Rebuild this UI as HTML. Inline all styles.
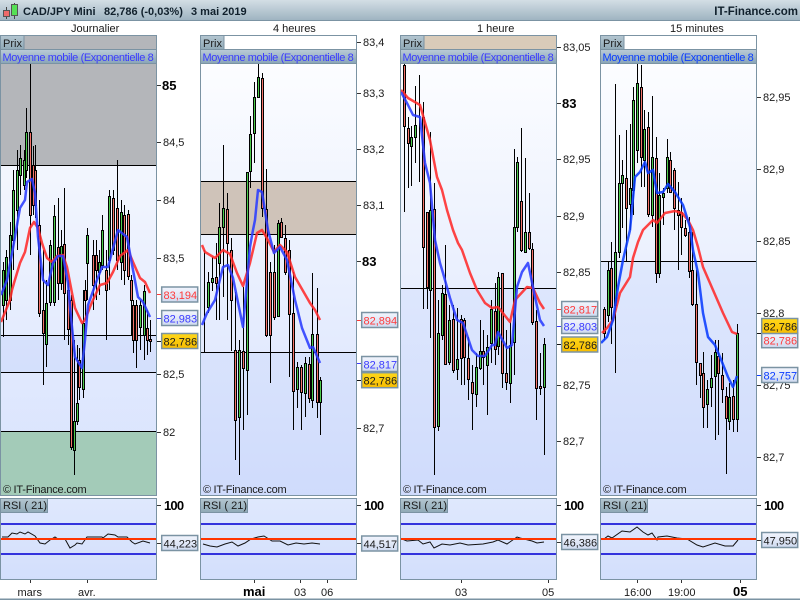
<!DOCTYPE html>
<html><head><meta charset="utf-8"><title>CAD/JPY Mini</title>
<style>
html,body{margin:0;padding:0;background:#fff;width:800px;height:600px;overflow:hidden}
svg{display:block;position:absolute;left:0;top:0}
text{font-family:"Liberation Sans",Arial,sans-serif;font-size:11px;fill:#1a1a1a}
.b{font-weight:bold;font-size:13px;fill:#000}
.h{font-weight:bold;font-size:11px;fill:#10202c}
.c{letter-spacing:-.2px}
.m{letter-spacing:-.38px}
.hh{font-size:13px;letter-spacing:-.8px}
.w{fill:none;stroke:#000;stroke-width:1}
.g{fill:#4ccb4c;stroke:#000;stroke-width:1}
.r{fill:#f4736a;stroke:#000;stroke-width:1}
.ln{fill:none;stroke-width:2.5;stroke-linejoin:round;stroke-opacity:.88}
.rs{fill:none;stroke:#111;stroke-width:1}
.t{stroke:#333;stroke-width:1;fill:none}
.bx{stroke:#7b93a3;stroke-width:1.5}
.pb{fill:none;stroke:#7b93a3;stroke-width:1}
</style></head><body>
<svg width="800" height="600" viewBox="0 0 800 600" xmlns="http://www.w3.org/2000/svg">
<defs>
<linearGradient id="hd" x1="0" y1="0" x2="0" y2="1"><stop offset="0" stop-color="#d3dee5"/><stop offset="1" stop-color="#9fb4c1"/></linearGradient>
<linearGradient id="bar" x1="0" y1="0" x2="0" y2="1"><stop offset="0" stop-color="#b9cad6"/><stop offset="1" stop-color="#8aa6b8"/></linearGradient>
<linearGradient id="lab" x1="0" y1="0" x2="0" y2="1"><stop offset="0" stop-color="#b4c6d1"/><stop offset="1" stop-color="#8fa9b6"/></linearGradient>
<linearGradient id="bg" gradientUnits="userSpaceOnUse" x1="0" y1="63" x2="0" y2="497"><stop offset="0" stop-color="#fcfdff"/><stop offset="1" stop-color="#d6e1fd"/></linearGradient>
<linearGradient id="dk" gradientUnits="userSpaceOnUse" x1="0" y1="261" x2="0" y2="497"><stop offset="0" stop-color="#dfe8fd"/><stop offset="1" stop-color="#cfdbfc"/></linearGradient>
<linearGradient id="rsi" x1="0" y1="0" x2="0" y2="1"><stop offset="0" stop-color="#dfe8fd"/><stop offset="1" stop-color="#d3dffc"/></linearGradient>
<linearGradient id="box" x1="0" y1="0" x2="0" y2="1"><stop offset="0" stop-color="#f2f5fd"/><stop offset="1" stop-color="#cfdaf0"/></linearGradient>
<linearGradient id="gold" x1="0" y1="0" x2="0" y2="1"><stop offset="0" stop-color="#ffd81a"/><stop offset="1" stop-color="#f8bd00"/></linearGradient>
</defs>

<!-- header -->
<rect x="0" y="0" width="800" height="20" fill="url(#hd)"/>
<rect x="0" y="20" width="800" height="1" fill="#7b93a3"/>
<path d="M6.5 7V19M14.500 3V19" stroke="#444" stroke-width="1" fill="none"/>
<rect x="3.500" y="10.500" width="6" height="6" fill="#ee6a6a" stroke="#555"/>
<rect x="11.500" y="4.500" width="6" height="11" fill="#55e055" stroke="#555"/>
<text class="h" x="23" y="15">CAD/JPY Mini</text>
<text class="h" x="104" y="15">82,786 (-0,03%)</text>
<text class="h" x="191" y="15">3 mai 2019</text>
<text class="h" x="798" y="15" text-anchor="end" style="font-size:11.5px">IT-Finance.com</text>
<text x="71" y="32">Journalier</text>
<text x="273" y="32">4 heures</text>
<text x="477" y="32">1 heure</text>
<text x="670" y="32">15 minutes</text>

<!-- PANEL 1 backgrounds -->
<rect x="0" y="35" width="157" height="461" fill="url(#bg)"/>
<rect x="0" y="35" width="157" height="130" fill="#b4b6ba"/>
<rect x="0" y="335" width="157" height="37" fill="#c6d5fa" fill-opacity=".45"/>
<rect x="0" y="431" width="157" height="65" fill="#a3cbb8"/>
<path d="M0 165.500H157M0 335.500H157M0 372.500H157M0 431.500H157" class="w"/>
<path class="w" d="M3.500 262V337M6.500 250V320M10.500 222V310M13.500 170V270M17.500 150V250M20.500 145V195M24.500 150V190M26.500 108V178M30.500 63V255M33.500 146V215M35.500 145V218M39.500 200V317M43.500 250V385M46.500 280V367M50.500 240V306M54.500 205V306M58.500 198V300M61.500 230V290M64.500 188V340M68.500 280V345M71.500 295V450M74.500 340V475M77.500 345V425M79.500 348V400M83.500 290V398M85.500 280V320M87.500 228V300M93.500 240V310M96.500 240V300M99.500 250V295M102.500 215V270M106.500 250V340M109.500 190V290M113.500 190V255M117.500 160V270M121.500 200V280M124.500 205V285M128.500 210V280M131.500 275V335M133.500 300V353M136.500 300V368M140.500 300V350M144.500 285V360M147.500 310V355M150.500 320V352"/>
<path class="g" d="M2.500 270.500h2V305.500h-2zM5.500 257.500h2V300.500h-2zM9.500 235.500h2V300.500h-2zM12.500 190.500h2V240.500h-2zM16.500 170.500h2V210.500h-2zM19.500 158.500h2V175.500h-2zM23.500 160.500h2V185.500h-2zM25.500 132.500h2V170.500h-2zM45.500 303.500h2V344.500h-2zM49.500 245.500h2V302.500h-2zM53.500 216.500h2V302.500h-2zM60.500 246.500h2V283.500h-2zM73.500 421.500h2V450.500h-2zM76.500 403.500h2V421.500h-2zM82.500 323.500h2V389.500h-2zM86.500 235.500h2V263.500h-2zM98.500 262.500h2V272.500h-2zM101.500 230.500h2V265.500h-2zM108.500 196.500h2V260.500h-2zM120.500 212.500h2V262.500h-2zM139.500 305.500h2V327.500h-2zM143.500 291.500h2V335.500h-2z"/>
<path class="r" d="M29.500 132.500h2V215.500h-2zM32.500 165.500h2V205.500h-2zM34.500 170.500h2V205.500h-2zM38.500 225.500h2V313.500h-2zM42.500 310.500h2V333.500h-2zM57.500 247.500h2V283.500h-2zM63.500 244.500h2V293.500h-2zM67.500 290.500h2V329.500h-2zM70.500 300.500h2V447.500h-2zM78.500 360.500h2V387.500h-2zM84.500 290.500h2V300.500h-2zM92.500 255.500h2V285.500h-2zM95.500 255.500h2V270.500h-2zM105.500 270.500h2V290.500h-2zM112.500 198.500h2V250.500h-2zM116.500 208.500h2V260.500h-2zM123.500 215.500h2V270.500h-2zM127.500 214.500h2V276.500h-2zM130.500 280.500h2V300.500h-2zM132.500 305.500h2V340.500h-2zM135.500 305.500h2V340.500h-2zM146.500 328.500h2V340.500h-2zM149.500 339.500h2V341.500h-2z"/>
<polyline class="ln" stroke="#ff2a2a" points="1,322 10,300 12,290 14,283 20,263 25,252 30,228 34,222 38,228 42,243 47,258 52,262 57,256 63,255 67,267 72,293 75,308 82,323 85,320 90,307 93,300 100,285 107,283 113,272 120,256 128,250 133,262 140,278 145,282 150,293"/>
<polyline class="ln" stroke="#2a3cff" points="1,295 7,280 13,248 20,208 25,200 27,182 32,179 35,193 38,237 43,280 48,285 53,263 58,256 63,256 68,283 70,307 75,357 82,368 85,340 88,305 97,280 102,267 108,267 118,230 127,237 133,270 138,297 143,302 150,317"/>
<rect x="0" y="35" width="157" height="15" fill="#b4b6ba"/>

<!-- PANEL 2 -->
<rect x="200" y="35" width="157" height="461" fill="url(#bg)"/>
<rect x="200" y="35" width="157" height="15" fill="#fff"/>
<rect x="200" y="181" width="157" height="53" fill="#cfc3b9"/>
<rect x="200" y="352" width="157" height="144" fill="url(#dk)"/>
<path d="M200 181.500H357M200 234.500H357M200 352.500H357" class="w"/>
<path class="w" d="M204.500 250V353M208.500 272V313M212.500 257V291M216.500 243V320M219.500 203V320M223.500 145V297M227.500 193V320M231.500 238V351M235.500 292V460M239.500 340V475M243.500 287V430M247.500 215V415M250.500 116V188M254.500 82V163M258.500 63V98M262.500 73V217M266.500 169V337M270.500 262V383M274.500 245V320M278.500 220V317M281.500 218V238M285.500 225V275M289.500 240V377M293.500 272V430M297.500 362V408M301.500 365V430M305.500 357V417M309.500 357V403M312.500 273V408M317.500 288V418M320.500 377V435"/>
<path class="g" d="M207.500 282.500h2V307.500h-2zM211.500 278.500h2V282.500h-2zM218.500 227.500h2V263.500h-2zM222.500 208.500h2V227.500h-2zM238.500 350.500h2V417.500h-2zM246.500 172.500h2V370.500h-2zM249.500 134.500h2V171.500h-2zM253.500 97.500h2V133.500h-2zM257.500 77.500h2V97.500h-2zM277.500 223.500h2V316.500h-2zM296.500 367.500h2V389.500h-2zM304.500 363.500h2V393.500h-2zM311.500 334.500h2V400.500h-2zM319.500 380.500h2V402.500h-2z"/>
<path class="r" d="M215.500 277.500h2V283.500h-2zM226.500 209.500h2V243.500h-2zM230.500 250.500h2V300.500h-2zM234.500 350.500h2V420.500h-2zM242.500 351.500h2V368.500h-2zM261.500 78.500h2V208.500h-2zM265.500 209.500h2V335.500h-2zM269.500 272.500h2V335.500h-2zM273.500 272.500h2V317.500h-2zM280.500 222.500h2V237.500h-2zM284.500 238.500h2V272.500h-2zM288.500 250.500h2V314.500h-2zM292.500 313.500h2V391.500h-2zM300.500 367.500h2V392.500h-2zM308.500 364.500h2V398.500h-2zM316.500 334.500h2V402.500h-2z"/>
<polyline class="ln" stroke="#ff2a2a" points="202,245 205,252 215,258 223,250 230,254 237,273 243,286 250,263 257,233 262,230 268,240 274,252 280,245 287,252 295,277 310,303 315,310 320,320"/>
<polyline class="ln" stroke="#2a3cff" points="202,325 207,313 215,300 223,267 228,265 233,278 243,327 250,247 253,230 255,220 258,190 262,192 268,230 274,253 280,247 287,260 295,300 302,328 310,348 313,347 320,363"/>

<!-- PANEL 3 -->
<rect x="400" y="35" width="157" height="461" fill="url(#bg)"/>
<rect x="400" y="35" width="157" height="15" fill="#d9cbb9"/>
<rect x="400" y="288" width="157" height="208" fill="url(#dk)"/>
<path d="M400 288.500H557" class="w"/>
<path class="w" d="M404.500 63V212M408.500 117V188M411.500 126V186M415.500 86V163M419.500 75V182M423.500 102V309M427.500 212V309M430.500 132V338M434.500 183V475M438.500 300V431M442.500 285V340M445.500 245V365M449.500 305V365M453.500 305V373M457.500 308V380M461.500 315V385M464.500 318V385M468.500 337V400M472.500 365V430M476.500 353V407M480.500 320V370M483.500 330V385M487.500 335V415M491.500 300V363M495.500 283V365M498.500 272V355M502.500 273V388M506.500 330V390M510.500 322V403M514.500 149V375M517.500 157V232M521.500 128V252M525.500 158V253M529.500 193V250M532.500 243V325M536.500 310V420M540.500 353V395M544.500 338V455"/>
<path class="g" d="M410.500 137.500h2V146.500h-2zM414.500 125.500h2V137.500h-2zM429.500 210.500h2V290.500h-2zM437.500 333.500h2V426.500h-2zM441.500 293.500h2V335.500h-2zM448.500 320.500h2V362.500h-2zM456.500 359.500h2V369.500h-2zM475.500 367.500h2V394.500h-2zM479.500 351.500h2V368.500h-2zM486.500 347.500h2V365.500h-2zM490.500 309.500h2V343.500h-2zM497.500 277.500h2V346.500h-2zM509.500 345.500h2V383.500h-2zM513.500 227.500h2V342.500h-2zM516.500 162.500h2V227.500h-2zM524.500 232.500h2V252.500h-2zM543.500 344.500h2V387.500h-2z"/>
<path class="r" d="M403.500 65.500h2V126.500h-2zM407.500 128.500h2V143.500h-2zM422.500 117.500h2V247.500h-2zM426.500 212.500h2V287.500h-2zM433.500 209.500h2V427.500h-2zM444.500 294.500h2V364.500h-2zM452.500 319.500h2V370.500h-2zM460.500 319.500h2V358.500h-2zM463.500 320.500h2V357.500h-2zM467.500 358.500h2V379.500h-2zM471.500 382.500h2V393.500h-2zM482.500 351.500h2V357.500h-2zM494.500 311.500h2V349.500h-2zM501.500 273.500h2V373.500h-2zM505.500 373.500h2V382.500h-2zM520.500 201.500h2V250.500h-2zM528.500 232.500h2V248.500h-2zM531.500 249.500h2V322.500h-2zM535.500 321.500h2V388.500h-2zM539.500 386.500h2V388.500h-2z"/>
<polyline class="ln" stroke="#ff2a2a" points="401,90 408,98 420,105 430,140 437,177 442,190 447,210 453,230 458,243 462,250 470,273 477,290 485,303 492,308 498,307 510,322 515,300 527,287 533,288 540,303 544,309"/>
<polyline class="ln" stroke="#2a3cff" points="401,92 408,105 413,115 420,117 425,163 430,183 433,217 435,240 440,263 443,273 450,298 457,320 463,323 472,350 478,356 485,356 492,345 495,345 498,332 507,348 512,345 517,287 522,272 528,263 535,297 540,320 544,326"/>

<!-- PANEL 4 -->
<rect x="600" y="35" width="157" height="461" fill="url(#bg)"/>
<rect x="600" y="35" width="157" height="15" fill="#fff"/>
<rect x="600" y="261" width="157" height="235" fill="url(#dk)"/>
<path d="M600 261.500H757" class="w"/>
<path class="w" d="M604.500 307V340M608.500 262V322M611.500 242V344M615.500 84V373M619.500 135V258M622.500 160V228M626.500 130V262M630.500 124V230M633.500 87V215M637.500 63V163M641.500 65V187M644.500 110V187M648.500 112V217M652.500 96V227M656.500 137V283M659.500 173V278M663.500 188V225M667.500 139V193M670.500 152V193M674.500 168V230M678.500 182V270M681.500 198V255M685.500 220V237M689.500 217V278M692.500 232V306M696.500 270V385M700.500 363V398M703.500 352V428M707.500 380V428M711.500 355V407M715.500 340V440M718.500 340V435M722.500 353V403M726.500 387V474M729.500 383V430M733.500 380V432M737.500 324V432"/>
<path class="g" d="M607.500 270.500h2V315.500h-2zM614.500 252.500h2V305.500h-2zM618.500 183.500h2V252.500h-2zM621.500 175.500h2V183.500h-2zM629.500 188.500h2V204.500h-2zM632.500 100.500h2V190.500h-2zM636.500 83.500h2V150.500h-2zM643.500 129.500h2V160.500h-2zM651.500 157.500h2V215.500h-2zM658.500 195.500h2V273.500h-2zM662.500 193.500h2V197.500h-2zM666.500 157.500h2V188.500h-2zM706.500 389.500h2V404.500h-2zM710.500 378.500h2V387.500h-2zM714.500 352.500h2V376.500h-2zM728.500 397.500h2V421.500h-2zM736.500 333.500h2V419.500h-2z"/>
<path class="r" d="M603.500 309.500h2V333.500h-2zM610.500 268.500h2V307.500h-2zM625.500 178.500h2V208.500h-2zM640.500 87.500h2V157.500h-2zM647.500 127.500h2V214.500h-2zM655.500 158.500h2V273.500h-2zM669.500 160.500h2V192.500h-2zM673.500 170.500h2V208.500h-2zM677.500 210.500h2V215.500h-2zM680.500 212.500h2V227.500h-2zM684.500 228.500h2V235.500h-2zM688.500 232.500h2V271.500h-2zM691.500 270.500h2V304.500h-2zM695.500 304.500h2V362.500h-2zM699.500 363.500h2V375.500h-2zM702.500 373.500h2V407.500h-2zM717.500 356.500h2V373.500h-2zM721.500 375.500h2V389.500h-2zM725.500 396.500h2V418.500h-2zM732.500 396.500h2V419.500h-2z"/>
<polyline class="ln" stroke="#ff2a2a" points="602,333 607,328 613,320 620,293 630,277 633,258 638,242 643,230 653,220 657,223 665,213 675,211 682,213 688,220 693,230 698,247 703,267 713,290 723,313 732,332 737,334"/>
<polyline class="ln" stroke="#0a3cff" points="601,343 607,337 613,320 618,287 623,260 630,230 635,177 640,172 645,162 648,173 653,170 657,193 663,192 668,184 675,192 683,205 690,227 693,250 698,273 703,313 708,337 715,345 722,362 728,377 733,387 737,376"/>

<!-- top bars over panels -->
<g>
<rect x="0" y="50" width="157" height="13" fill="url(#bar)"/>
<rect x="200" y="50" width="157" height="13" fill="url(#bar)"/>
<rect x="400" y="50" width="157" height="13" fill="url(#bar)"/>
<rect x="600" y="50" width="157" height="13" fill="url(#bar)"/>
<path d="M0 63.500H157M200 63.500H357M400 63.500H557M600 63.500H757M0 49.500H157M200 49.500H357M400 49.500H557M600 49.500H757" stroke="#7b93a3" fill="none"/>
<rect x="0.500" y="35.500" width="23.500" height="14" fill="url(#lab)" stroke="#7b93a3"/>
<rect x="200.500" y="35.500" width="23.500" height="14" fill="url(#lab)" stroke="#7b93a3"/>
<rect x="400.500" y="35.500" width="23.500" height="14" fill="url(#lab)" stroke="#7b93a3"/>
<rect x="600.500" y="35.500" width="23.500" height="14" fill="url(#lab)" stroke="#7b93a3"/>
<text x="3" y="47">Prix</text><text x="203" y="47">Prix</text><text x="403" y="47">Prix</text><text x="603" y="47">Prix</text>
<svg x="0" y="50" width="156" height="14"><text class="m" x="2.500" y="11" style="fill:#3a3aff">Moyenne mobile (Exponentielle 8</text></svg>
<svg x="200" y="50" width="156" height="14"><text class="m" x="2.500" y="11" style="fill:#3a3aff">Moyenne mobile (Exponentielle 8</text></svg>
<svg x="400" y="50" width="156" height="14"><text class="m" x="2.500" y="11" style="fill:#3a3aff">Moyenne mobile (Exponentielle 8</text></svg>
<svg x="600" y="50" width="156" height="14"><text class="m" x="2.500" y="11" style="fill:#0a3cff">Moyenne mobile (Exponentielle 8</text></svg>
</g>
<text x="3" y="493">©</text><text class="c" x="13.500" y="493">IT-Finance.com</text>
<text x="203" y="493">©</text><text class="c" x="213.500" y="493">IT-Finance.com</text>
<text x="403" y="493">©</text><text class="c" x="413.500" y="493">IT-Finance.com</text>
<text x="603" y="493">©</text><text class="c" x="613.500" y="493">IT-Finance.com</text>
<path class="pb" d="M.5 35.500H156.500V495.500H.5zM200.500 35.500H356.500V495.500H200.500zM400.500 35.500H556.500V495.500H400.500zM600.500 35.500H756.500V495.500H600.500z"/>

<!-- axis ticks -->
<path class="t" d="M157 85.500h4M157 142.500h4M157 200.500h4M157 258.500h4M157 374.500h4M157 432.500h4M357 42.500h4M357 93.500h4M357 149.500h4M357 205.500h4M357 261.500h4M357 428.500h4M557 47.500h4M557 103.500h4M557 159.500h4M557 216.500h4M557 272.500h4M557 385.500h4M557 441.500h4M757 97.500h4M757 169.500h4M757 241.500h4M757 313.500h4M757 385.500h4M757 457.500h4"/>
<path d="M157 294.500h4" stroke="#ff3a3a"/><path d="M157 318.500h4" stroke="#3a3aff"/><path d="M157 341.500h4" stroke="#111"/>
<path d="M357 320.500h4" stroke="#ff3a3a"/><path d="M357 363.500h4" stroke="#3a3aff"/><path d="M357 380.500h4" stroke="#111"/>
<path d="M557 309.500h4" stroke="#ff3a3a"/><path d="M557 326.500h4" stroke="#3a3aff"/><path d="M557 344.500h4" stroke="#111"/>
<path d="M757 333.500h4" stroke="#111"/><path d="M757 375.500h4" stroke="#0a3cff"/>

<!-- axis labels -->
<text class="b" x="162" y="90">85</text><text x="163" y="146">84,5</text><text x="163" y="204">84</text><text x="163" y="262">83,5</text><text x="163" y="378">82,5</text><text x="163" y="436">82</text>
<text x="363" y="46">83,4</text><text x="363" y="97">83,3</text><text x="363" y="153">83,2</text><text x="363" y="209">83,1</text><text class="b" x="362" y="266">83</text><text x="363" y="372">82,8</text><text x="363" y="432">82,7</text>
<text x="563" y="51">83,05</text><text class="b" x="562" y="108">83</text><text x="563" y="163">82,95</text><text x="563" y="220">82,9</text><text x="563" y="276">82,85</text><text x="563" y="389">82,75</text><text x="563" y="445">82,7</text>
<text x="763" y="101">82,95</text><text x="763" y="173">82,9</text><text x="763" y="245">82,85</text><text x="763" y="317">82,8</text><text x="763" y="389">82,75</text><text x="763" y="461">82,7</text>

<!-- value boxes -->
<rect class="bx" x="161.700" y="287" width="36" height="15" fill="url(#box)"/><text x="163.500" y="299" style="fill:#ff3a3a">83,194</text>
<rect class="bx" x="161.700" y="310.500" width="36" height="15" fill="url(#box)"/><text x="163.500" y="322.500" style="fill:#3a3aff">82,983</text>
<rect class="bx" x="161.700" y="333.500" width="36" height="15" fill="url(#gold)"/><text x="163.500" y="345.500">82,786</text>

<rect class="bx" x="361.700" y="312.500" width="36" height="15" fill="url(#box)"/><text x="363.500" y="324.500" style="fill:#ff3a3a">82,894</text>
<rect class="bx" x="361.700" y="356.500" width="36" height="15" fill="url(#box)"/><text x="363.500" y="368.500" style="fill:#3a3aff">82,817</text>
<rect class="bx" x="361.700" y="372.700" width="36" height="15" fill="url(#gold)"/><text x="363.500" y="384.500">82,786</text>

<rect class="bx" x="561.700" y="301.500" width="36" height="15" fill="url(#box)"/><text x="563.500" y="313.500" style="fill:#ff3a3a">82,817</text>
<rect class="bx" x="561.700" y="318.500" width="36" height="15" fill="url(#box)"/><text x="563.500" y="330.500" style="fill:#3a3aff">82,803</text>
<rect class="bx" x="561.700" y="337" width="36" height="15" fill="url(#gold)"/><text x="563.500" y="349">82,786</text>

<rect class="bx" x="761.700" y="332.700" width="36" height="15" fill="url(#box)"/><text x="763.500" y="344.500" style="fill:#ff3a3a">82,786</text>
<rect class="bx" x="761.700" y="318.500" width="36" height="15" fill="url(#gold)"/><text x="763.500" y="330.500">82,786</text>
<rect class="bx" x="761.700" y="367.500" width="36" height="15" fill="url(#box)"/><text x="763.500" y="379.500" style="fill:#0a3cff">82,757</text>

<!-- RSI panels -->
<rect x=".5" y="498.500" width="156" height="81" fill="url(#rsi)" stroke="#7b93a3"/>
<rect x="200.500" y="498.500" width="156" height="81" fill="url(#rsi)" stroke="#7b93a3"/>
<rect x="400.500" y="498.500" width="156" height="81" fill="url(#rsi)" stroke="#7b93a3"/>
<rect x="600.500" y="498.500" width="156" height="81" fill="url(#rsi)" stroke="#7b93a3"/>
<path d="M1 524H156M1 554H156M201 524H356M201 554H356M401 524H556M401 554H556M601 524H756M601 554H756" stroke="#3333dd" stroke-width="2" fill="none"/>
<polyline class="rs" points="2,537 8,537 12,533 17,534 20,532 25,534 28,532 35,536 40,543 45,544 50,540 55,537 58,539 65,539 70,548 75,545 77,543 82,544 87,537 102,537 103,538 108,534 115,535 118,537 127,537 132,542 135,544 143,541 150,543"/>
<polyline class="rs" points="203,544 210,546 217,547 225,544 232,542 238,546 245,543 251,539 258,537 264,536 272,541 280,541 288,545 296,543 304,544 312,543 320,544"/>
<polyline class="rs" points="402,539 407,541 418,540 423,544 430,542 434,548 442,544 450,545 460,543 468,545 483,544 493,542 498,540 507,544 517,537 520,538 532,541 537,543 544,542"/>
<polyline class="rs" points="604,539 608,536 612,538 622,531 630,532 637,527 643,532 648,535 652,533 657,540 658,537 667,536 677,538 687,539 697,545 703,547 715,543 725,546 733,546 738,540"/>
<path d="M1 539H156M201 539H356M401 539H556M601 539H756" stroke="#ff3300" stroke-width="2" fill="none"/>
<rect x=".5" y="498.500" width="47" height="14" fill="url(#lab)" stroke="#7b93a3"/><text x="3" y="509">RSI ( 21)</text>
<rect x="200.500" y="498.500" width="47" height="14" fill="url(#lab)" stroke="#7b93a3"/><text x="203" y="509">RSI ( 21)</text>
<rect x="400.500" y="498.500" width="47" height="14" fill="url(#lab)" stroke="#7b93a3"/><text x="403" y="509">RSI ( 21)</text>
<rect x="600.500" y="498.500" width="47" height="14" fill="url(#lab)" stroke="#7b93a3"/><text x="603" y="509">RSI ( 21)</text>
<path class="t" d="M157 505.500h4M357 505.500h4M557 505.500h4M757 505.500h4M157 543.500h4M357 543.500h4M557 542.500h4M757 540.500h4M30.500 580v3M87.500 580v3M254.500 580v3M300.500 580v3M327.500 580v3M461.500 580v3M548.500 580v3M637.500 580v3M681.500 580v3M740.500 580v3"/>
<text class="b hh" x="164" y="510">100</text>
<text class="b hh" x="364" y="510">100</text>
<text class="b hh" x="564" y="510">100</text>
<text class="b hh" x="764" y="510">100</text>
<rect class="bx" x="161.700" y="535.500" width="36" height="15" fill="url(#box)"/><text x="163.500" y="547.500">44,223</text>
<rect class="bx" x="361.700" y="536" width="36" height="15" fill="url(#box)"/><text x="363.500" y="548">44,517</text>
<rect class="bx" x="561.700" y="534.500" width="36" height="15" fill="url(#box)"/><text x="563.500" y="546.500">46,386</text>
<rect class="bx" x="761.700" y="532.500" width="36" height="15" fill="url(#box)"/><text x="763.500" y="544.500">47,950</text>

<!-- time axis -->
<text x="17.500" y="596">mars</text><text x="78" y="596">avr.</text>
<text class="b" x="243" y="596">mai</text><text x="294" y="596">03</text><text x="321" y="596">06</text>
<text x="455" y="596">03</text><text x="542" y="596">05</text>
<text x="624" y="596">16:00</text><text x="668" y="596">19:00</text><text class="b" x="733" y="596">05</text>
<rect x="0" y="598.500" width="800" height="1.500" fill="#7b93a3"/>
</svg>
</body></html>
